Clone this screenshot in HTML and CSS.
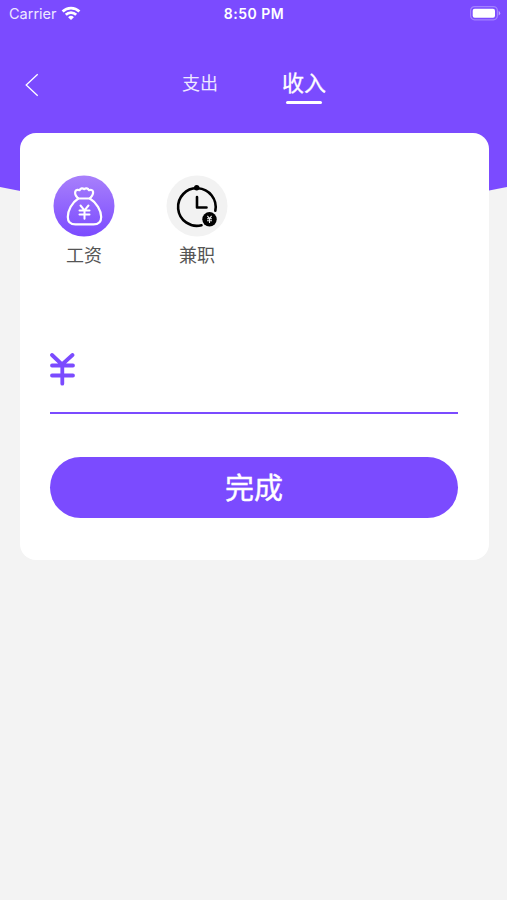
FILE: index.html
```html
<!DOCTYPE html>
<html lang="zh-CN">
<head>
    <meta charset="UTF-8">
    <meta name="viewport" content="width=device-width, initial-scale=1.0">
    <title>收入</title>
    <link rel="stylesheet" href="styles.css">
</head>
<body>
    <header class="header">
        <div class="status-bar">
            <div class="carrier">
                <span>Carrier</span>
                <svg class="wifi" width="20" height="15" viewBox="0 0 20 15" fill="none" stroke="#fff" stroke-width="2.7">
                    <path d="M1.6 5.5a12 12 0 0 1 16.8 0"/>
                    <path d="M4.8 8.8a7.4 7.4 0 0 1 10.4 0"/>
                    <path d="M7.1 11.2a4.2 4.2 0 0 1 5.8 0L10 14z" fill="#fff" stroke="none"/>
                </svg>
            </div>
            <div class="time">8:50 PM</div>
            <svg class="battery" width="31" height="15" viewBox="0 0 31 15">
                <rect x=".6" y=".6" width="26.8" height="13.2" rx="4" fill="none" stroke="#fff" stroke-opacity=".3" stroke-width="1.2"/>
                <rect x="2.7" y="2.7" width="22.3" height="9" rx="2" fill="#fff"/>
                <path d="M28.7 4.8q3 2.4 0 4.8z" fill="#fff" fill-opacity=".5"/>
            </svg>
        </div>
        <nav class="nav">
            <svg class="back" width="14" height="24" viewBox="0 0 14 24" fill="none" stroke="#fff" stroke-width="1.3">
                <path d="M12.7 1.2L1.2 12l11.5 10.8"/>
            </svg>
            <div class="tabs">
                <span class="tab">支出</span>
                <span class="tab active">收入</span>
            </div>
        </nav>
        <svg class="curve" viewBox="0 0 507 54" preserveAspectRatio="none">
            <path d="M0 0v21Q253.500 74 507 21V0z" fill="#7b4bff"/>
        </svg>
    </header>

    <main class="card">
        <div class="categories">
            <div class="category">
                <svg width="62" height="62" viewBox="0 0 62 62">
                    <defs>
                        <linearGradient id="bag" x1="0" y1="0" x2="0" y2="1">
                            <stop offset="0" stop-color="#a880fb"/>
                            <stop offset="1" stop-color="#7b4bff"/>
                        </linearGradient>
                    </defs>
                    <circle cx="31" cy="31" r="30.500" fill="url(#bag)"/>
                    <g fill="none" stroke="#fff" stroke-width="2.200" stroke-linecap="round" stroke-linejoin="round">
                        <path d="M25.300 23.500c-2.300-2-3.600-5-3-7 .8-2 3-1.900 4.200-1.300 1.200-2.200 3.200-2.400 4.700-1 1.500-1.400 3.700-1 4.800 1 1.600-.6 3.600-.4 4 1.300.5 2-.9 4.700-3.200 7z"/>
                        <path d="M25.300 23.500C19 27.500 14.800 35.500 14.800 42c0 5 3.200 7.400 7.700 7.400h18c4.500 0 7.700-2.400 7.700-7.400 0-6.500-4.700-14.500-11.400-18.500"/>
                        <path d="M27.500 30.500l4 4.800 4-4.800M26.500 35.500h10M26.500 39.500h10M31.500 35.500v8.200" stroke-width="2"/>
                    </g>
                </svg>
                <span class="label">工资</span>
            </div>
            <div class="category">
                <svg width="62" height="62" viewBox="0 0 62 62">
                    <circle cx="31" cy="31" r="30.500" fill="#f2f2f2"/>
                    <circle cx="30.700" cy="12.700" r="2.700"/>
                    <g fill="none" stroke="#000" stroke-width="2.600" stroke-linecap="round" stroke-linejoin="round">
                        <path d="M49.300 35.700A18.800 18.800 0 1 0 35.500 50.200"/>
                        <path d="M31 22v10.500h9.500"/>
                    </g>
                    <circle cx="43.500" cy="44.300" r="7.200"/>
                    <path d="M41.400 40.800l2.100 2.700 2.100-2.700M41 43.800h5M41 45.700h5M43.500 43.500v4.500" fill="none" stroke="#eee" stroke-width="1.100"/>
                </svg>
                <span class="label">兼职</span>
            </div>
        </div>

        <div class="amount">
            <svg width="26" height="33" viewBox="0 0 26 33" fill="none" stroke="#7b4bff" stroke-width="3.800" stroke-linecap="round" stroke-linejoin="round">
                <path d="M2 2l10 9.500L22.500 2M2 12.500h21M2 22.500h21M12.300 11.500v19.200"/>
            </svg>
        </div>

        <button class="submit">完成</button>
    </main>
</body>
</html>
```
FILE: styles.css
```css
* {
    box-sizing: border-box;
}

body {
    margin: 0;
    min-height: 900px;
    background: #f3f3f3;
    font-family: Inter, "Noto Sans CJK SC", sans-serif;
}

.header {
    color: #fff;
}

.status-bar {
    display: grid;
    grid-template-columns: 1fr auto 1fr;
    align-items: center;
    height: 26px;
    padding: 0 6px 0 9px;
    background: #7b4bff;
}

.carrier {
    display: flex;
    align-items: center;
    gap: 5px;
    font-size: 14.5px;
    color: #eee8ff;
}

.wifi {
    margin-left: -1px;
}

.time {
    margin-left: -2px;
    font-size: 14px;
    font-weight: 600;
    letter-spacing: 0.5px;
}

.battery {
    justify-self: end;
}

.nav {
    display: grid;
    grid-template-columns: 1fr auto 1fr;
    align-items: center;
    height: 140px;
    padding: 0 25px 24px;
    background: #7b4bff;
}

.back {
    margin-top: 1px;
}

.tabs {
    display: flex;
    align-items: center;
    gap: 64px;
    margin-left: 1px;
}

.tab {
    font-size: 18px;
    line-height: 36px;
    color: #eee8ff;
}

.tab.active {
    display: flex;
    flex-direction: column;
    align-items: center;
    font-size: 22px;
    line-height: 36px;
    color: #fff;
    -webkit-text-stroke: 0.3px #fff;
}

.tab.active::after {
    content: "";
    width: 36px;
    height: 3px;
    border-radius: 2px;
    background: #fff;
}

.curve {
    display: block;
    width: 100%;
    height: 54px;
}

.card {
    position: relative;
    height: 427px;
    margin: -87px 18.5px 0 19.5px;
    padding: 42px 30.5px;
    border-radius: 16px;
    background: #fff;
}

.categories {
    display: flex;
    gap: 45px;
}

.category {
    display: flex;
    flex-direction: column;
    align-items: center;
    width: 68px;
}

.label {
    margin-top: 6px;
    font-size: 18px;
    line-height: 26px;
    color: #555;
}

.amount {
    height: 61px;
    margin-top: 84px;
    border-bottom: 2px solid #7b4bff;
}

.submit {
    display: block;
    width: 100%;
    height: 61px;
    margin-top: 43px;
    padding: 2px 0 0;
    border: none;
    border-radius: 31px;
    background: #7b4bff;
    color: #fff;
    font-family: inherit;
    font-size: 29px;
    line-height: 59px;
    -webkit-text-stroke: 0.4px #fff;
}
```
